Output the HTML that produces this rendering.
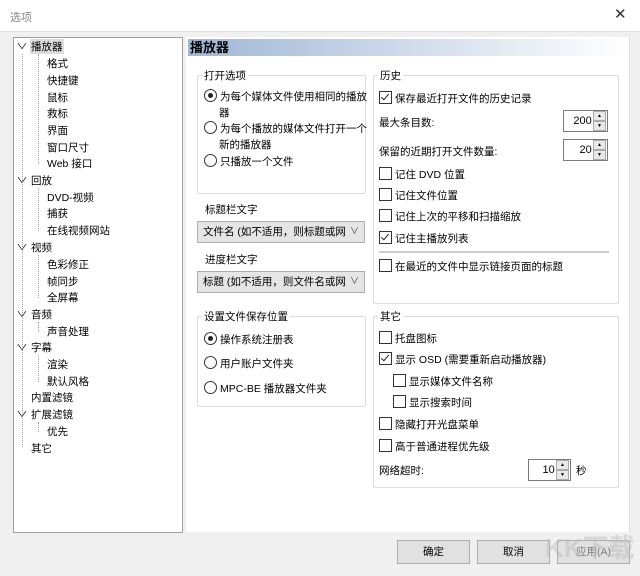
<html><head><style>
body{margin:0;width:640px;height:576px;background:#f0f0f0;font-family:"Liberation Sans","Noto Sans CJK SC",sans-serif;font-size:10.5px;color:#000;position:relative;overflow:hidden}
.a{position:absolute;white-space:nowrap}
.tb{position:absolute;left:0;top:0;width:640px;height:31px;background:#fff;border-bottom:1px solid #e0e0e0}
.tree{position:absolute;left:13px;top:37px;width:168px;height:494px;background:#fff;border:1px solid #a0a0a0}
.panel{position:absolute;left:186px;top:37px;width:443px;height:495px;background:#fff;border-right:1px solid #ddd}
.grp{position:absolute;border:1px solid #dcdcdc;border-radius:2px}
.gl{position:absolute;top:-8px;left:6px;background:#fff;padding:0 2px}
.cb{display:inline-block;width:11px;height:11px;border:1px solid #333;vertical-align:-2px;margin-right:3px;background:#fff;position:relative}
.cb.c::after{content:"";position:absolute;left:3px;top:0px;width:3px;height:7px;border:solid #222;border-width:0 1.5px 1.5px 0;transform:rotate(40deg)}
.rb{display:inline-block;width:11px;height:11px;border:1px solid #333;border-radius:50%;vertical-align:-2px;margin-right:3px;position:relative;background:#fff}
.rb.c::after{content:"";position:absolute;left:3px;top:3px;width:5px;height:5px;border-radius:50%;background:#222}
.combo{position:absolute;left:197px;width:166px;height:20px;background:#e5e5e5;border:1px solid #adadad;line-height:20px;overflow:hidden;white-space:nowrap}
.combo b{font-weight:normal;position:absolute;left:5px;width:142px;overflow:hidden}
.combo i{position:absolute;right:5px;top:-1px;font-style:normal;font-size:9px;color:#444}
.spin{position:absolute;width:43px;height:20px;border:1px solid #7a7a7a;background:#fff;text-align:right;line-height:20px;font-size:11px}
.spin span{position:absolute;right:1px;width:11px;height:8px;background:#e8e8e8;border:1px solid #aaa;font-size:5px;line-height:8px;text-align:center}
.btn{position:absolute;top:540px;width:71px;height:22px;background:#e1e1e1;border:1px solid #adadad;text-align:center;line-height:22px}
.ti{position:absolute;white-space:nowrap}
.vl{position:absolute;border-left:1px dotted #a0a0a0}
.ch{position:absolute;left:18px;font-size:8px;transform:scaleX(1.4)}
</style></head><body>
<div class="tb"></div>
<div class="a" style="left:10px;top:9px;color:#888;font-size:11px">选项</div>
<div class="a" style="left:614px;top:5px;font-size:15px;color:#333">✕</div>
<div class="tree"></div>
<div class="panel"></div>
<div class="a" style="left:188px;top:39px;width:439px;height:17px;background:linear-gradient(90deg,#9fb7d6,#fff);font-weight:bold;font-size:13px;line-height:17px;text-indent:2px">播放器</div>

<div class="grp" style="left:197px;top:75px;width:167px;height:117px"><span class="gl" style="left:4px">打开选项</span></div>
<div class="a" style="left:204px;top:89px;line-height:16px"><span class="rb c"></span>为每个媒体文件使用相同的播放<br><span style="padding-left:15px">器</span></div>
<div class="a" style="left:204px;top:121px;line-height:16px"><span class="rb"></span>为每个播放的媒体文件打开一个<br><span style="padding-left:15px">新的播放器</span></div>
<div class="a" style="left:204px;top:154px"><span class="rb"></span>只播放一个文件</div>
<div class="a" style="left:205px;top:202px">标题栏文字</div>
<div class="combo" style="top:221px"><b>文件名 (如不适用，则标题或网址</b><i>∨</i></div>
<div class="a" style="left:205px;top:252px">进度栏文字</div>
<div class="combo" style="top:271px"><b>标题 (如不适用，则文件名或网址</b><i>∨</i></div>
<div class="grp" style="left:197px;top:316px;width:167px;height:89px"><span class="gl" style="left:4px">设置文件保存位置</span></div>
<div class="a" style="left:204px;top:332px"><span class="rb c"></span>操作系统注册表</div>
<div class="a" style="left:204px;top:356px"><span class="rb"></span>用户账户文件夹</div>
<div class="a" style="left:204px;top:381px"><span class="rb"></span>MPC-BE 播放器文件夹</div>

<div class="grp" style="left:373px;top:75px;width:244px;height:227px"><span class="gl" style="left:4px">历史</span></div>
<div class="a" style="left:379px;top:91px"><span class="cb c"></span>保存最近打开文件的历史记录</div>
<div class="a" style="left:379px;top:115px">最大条目数:</div>
<div class="spin" style="left:563px;top:110px">200&nbsp;&nbsp;&nbsp;&nbsp;&nbsp;<span style="top:0">▲</span><span style="top:10px">▼</span></div>
<div class="a" style="left:379px;top:144px">保留的近期打开文件数量:</div>
<div class="spin" style="left:563px;top:139px">20&nbsp;&nbsp;&nbsp;&nbsp;&nbsp;<span style="top:0">▲</span><span style="top:10px">▼</span></div>
<div class="a" style="left:379px;top:167px"><span class="cb"></span>记住 DVD 位置</div>
<div class="a" style="left:379px;top:188px"><span class="cb"></span>记住文件位置</div>
<div class="a" style="left:379px;top:209px"><span class="cb"></span>记住上次的平移和扫描缩放</div>
<div class="a" style="left:379px;top:231px"><span class="cb c"></span>记住主播放列表</div>
<div class="a" style="left:379px;top:251px;width:230px;border-top:2px solid #ccc"></div>
<div class="a" style="left:379px;top:259px"><span class="cb"></span>在最近的文件中显示链接页面的标题</div>

<div class="grp" style="left:373px;top:316px;width:244px;height:170px"><span class="gl" style="left:4px">其它</span></div>
<div class="a" style="left:379px;top:331px"><span class="cb"></span>托盘图标</div>
<div class="a" style="left:379px;top:352px"><span class="cb c"></span>显示 OSD (需要重新启动播放器)</div>
<div class="a" style="left:393px;top:374px"><span class="cb"></span>显示媒体文件名称</div>
<div class="a" style="left:393px;top:395px"><span class="cb"></span>显示搜索时间</div>
<div class="a" style="left:379px;top:417px"><span class="cb"></span>隐藏打开光盘菜单</div>
<div class="a" style="left:379px;top:439px"><span class="cb"></span>高于普通进程优先级</div>
<div class="a" style="left:379px;top:463px">网络超时:</div>
<div class="spin" style="left:528px;top:459px;width:41px">10&nbsp;&nbsp;&nbsp;&nbsp;&nbsp;<span style="top:0">▲</span><span style="top:10px">▼</span></div>
<div class="a" style="left:576px;top:463px">秒</div>

<div class="btn" style="left:397px">确定</div>
<div class="btn" style="left:477px">取消</div>
<div class="btn" style="left:557px;color:#777">应用(A)</div>
<div class="a" style="left:545px;top:528px;font-size:26px;font-weight:bold;color:rgba(190,190,190,.5)">KK下载</div>

<div class="ti" style="left:30px;top:39px;background:#ddd;padding:0 1px">播放器</div>
<div class="ti" style="left:47px;top:56px">格式</div>
<div class="ti" style="left:47px;top:73px">快捷键</div>
<div class="ti" style="left:47px;top:90px">鼠标</div>
<div class="ti" style="left:47px;top:106px">救标</div>
<div class="ti" style="left:47px;top:123px">界面</div>
<div class="ti" style="left:47px;top:140px">窗口尺寸</div>
<div class="ti" style="left:47px;top:156px">Web 接口</div>
<div class="ti" style="left:31px;top:173px">回放</div>
<div class="ti" style="left:47px;top:190px">DVD-视频</div>
<div class="ti" style="left:47px;top:206px">捕获</div>
<div class="ti" style="left:47px;top:223px">在线视频网站</div>
<div class="ti" style="left:31px;top:240px">视频</div>
<div class="ti" style="left:47px;top:257px">色彩修正</div>
<div class="ti" style="left:47px;top:274px">帧同步</div>
<div class="ti" style="left:47px;top:290px">全屏幕</div>
<div class="ti" style="left:31px;top:307px">音频</div>
<div class="ti" style="left:47px;top:324px">声音处理</div>
<div class="ti" style="left:31px;top:340px">字幕</div>
<div class="ti" style="left:47px;top:357px">渲染</div>
<div class="ti" style="left:47px;top:374px">默认风格</div>
<div class="ti" style="left:31px;top:390px">内置滤镜</div>
<div class="ti" style="left:31px;top:407px">扩展滤镜</div>
<div class="ti" style="left:47px;top:424px">优先</div>
<div class="ti" style="left:31px;top:441px">其它</div>
<div class="ch" style="top:41px">∨</div>
<div class="ch" style="top:175px">∨</div>
<div class="ch" style="top:242px">∨</div>
<div class="ch" style="top:309px">∨</div>
<div class="ch" style="top:342px">∨</div>
<div class="ch" style="top:409px">∨</div>
<div class="vl" style="left:22px;top:54px;height:393px"></div>
<div class="vl" style="left:38px;top:54px;height:110px"></div>
<div class="vl" style="left:38px;top:188px;height:43px"></div>
<div class="vl" style="left:38px;top:255px;height:43px"></div>
<div class="vl" style="left:38px;top:322px;height:10px"></div>
<div class="vl" style="left:38px;top:355px;height:27px"></div>
<div class="vl" style="left:38px;top:422px;height:10px"></div>
</body></html>
